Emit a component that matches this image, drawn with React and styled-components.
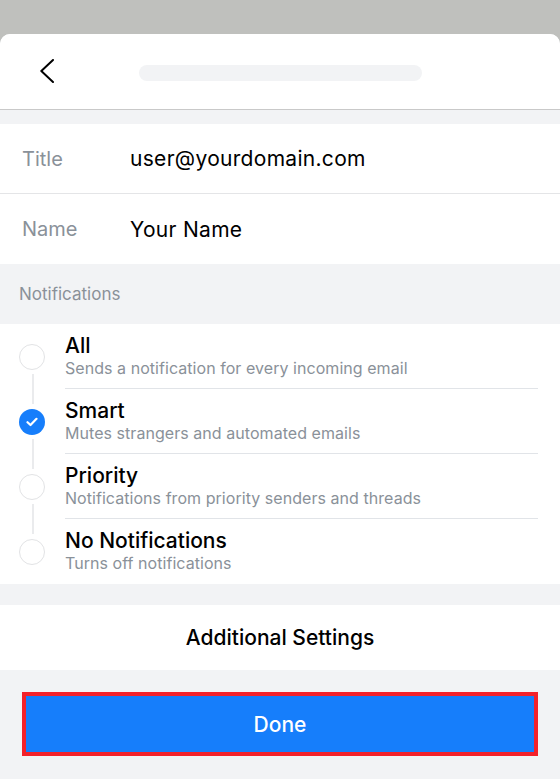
import React from "react";
import styled, { createGlobalStyle } from "styled-components";

const Global = createGlobalStyle`
  html, body { margin: 0; padding: 0; }
  body {
    background: #f2f3f5;
    font-family: Inter, "Noto Sans", "Liberation Sans", sans-serif;
    -webkit-font-smoothing: antialiased;
  }
`;

const Page = styled.div`
  background: #bfc0bd;
  padding-top: 34px;
  min-height: 779px;
  box-sizing: border-box;
  display: flex;
  flex-direction: column;
`;

const Sheet = styled.div`
  flex: 1;
  background: #f2f3f5;
  border-radius: 10px 10px 0 0;
  overflow: hidden;
  display: flex;
  flex-direction: column;
`;

const Header = styled.header`
  height: 75px;
  background: #fff;
  border-bottom: 1px solid #c9c9c9;
  display: flex;
  align-items: center;
  padding-left: 40px;
  gap: 85px;
  box-sizing: content-box;
`;

const BackButton = styled.button`
  border: 0;
  padding: 0;
  background: none;
  width: 14px;
  height: 24px;
  display: flex;
  margin-bottom: 1px;
`;

const TitlePill = styled.div`
  width: 283px;
  height: 16px;
  border-radius: 8px;
  background: #f2f3f5;
  margin-top: 2px;
`;

const Group = styled.section`
  background: #fff;
  margin-top: ${(p) => p.$gap || 0}px;
`;

const FieldRow = styled.div`
  height: ${(p) => p.$h}px;
  display: flex;
  align-items: center;
  padding-left: 22px;
  border-bottom: ${(p) => (p.$divider ? "1px solid #e4e5e7" : "none")};
`;

const FieldLabel = styled.span`
  width: 108px;
  font-size: 20px;
  color: #8a9199;
`;

const FieldValue = styled.span`
  font-size: 21px;
  letter-spacing: 0.3px;
  color: #000;
`;

const SectionHeader = styled.div`
  height: 60px;
  display: flex;
  align-items: center;
  padding-left: 19px;
  font-size: 17px;
  color: #8a9199;
`;

const OptionRow = styled.div`
  height: 65px;
  display: grid;
  grid-template-columns: 65px 1fr;
`;

const RadioCell = styled.div`
  position: relative;
  display: flex;
  align-items: center;
  padding-left: 19px;

  &::before,
  &::after {
    content: "";
    position: absolute;
    left: 31.5px;
    width: 2px;
    background: #eaebed;
  }
  &::before {
    top: 0;
    height: ${(p) => (p.$first ? 0 : 15)}px;
  }
  &::after {
    bottom: 0;
    height: ${(p) => (p.$last ? 0 : 15)}px;
  }
`;

const Radio = styled.span`
  width: 26px;
  height: 26px;
  box-sizing: border-box;
  border-radius: 50%;
  border: ${(p) => (p.$checked ? "none" : "1.5px solid #e2e3e5")};
  background: ${(p) => (p.$checked ? "#167efb" : "#fff")};
  display: flex;
  align-items: center;
  justify-content: center;
`;

const OptionText = styled.div`
  margin-right: 22px;
  padding-top: 9px;
  box-sizing: border-box;
  border-bottom: ${(p) => (p.$divider ? "1px solid #e1e4e8" : "none")};
  display: flex;
  flex-direction: column;
`;

const OptionTitle = styled.span`
  font-size: 21px;
  font-weight: 500;
  line-height: 25px;
  color: #000;
`;

const OptionSub = styled.span`
  font-size: 16px;
  line-height: 20px;
  letter-spacing: 0.05px;
  color: #8a9199;
`;

const ActionRow = styled.button`
  width: 100%;
  height: 65px;
  border: 0;
  background: #fff;
  font-family: inherit;
  font-size: 21px;
  font-weight: 500;
  color: #000;
  margin-top: 21px;
`;

const DoneWrap = styled.div`
  padding: 22px 22px 0 22px;
`;

const DoneButton = styled.button`
  width: 100%;
  height: 64px;
  box-sizing: border-box;
  border: 4px solid #f3212a;
  background: #167efb;
  color: #fff;
  font-family: inherit;
  font-size: 21px;
  font-weight: 500;
`;

const options = [
  { title: "All", sub: "Sends a notification for every incoming email" },
  { title: "Smart", sub: "Mutes strangers and automated emails", checked: true },
  { title: "Priority", sub: "Notifications from priority senders and threads" },
  { title: "No Notifications", sub: "Turns off notifications" },
];

export default function App() {
  return (
    <>
      <Global />
      <Page>
        <Sheet>
          <Header>
            <BackButton aria-label="Back">
              <svg width="14" height="24" viewBox="0 0 14 24">
                <polyline
                  points="13,1 1.3,12 13,23"
                  fill="none"
                  stroke="#000"
                  strokeWidth="2"
                  strokeLinecap="round"
                  strokeLinejoin="round"
                />
              </svg>
            </BackButton>
            <TitlePill />
          </Header>

          <Group $gap={14}>
            <FieldRow $h={69} $divider>
              <FieldLabel>Title</FieldLabel>
              <FieldValue>user@yourdomain.com</FieldValue>
            </FieldRow>
            <FieldRow $h={70}>
              <FieldLabel>Name</FieldLabel>
              <FieldValue>Your Name</FieldValue>
            </FieldRow>
          </Group>

          <SectionHeader>Notifications</SectionHeader>

          <Group>
            {options.map((o, i) => (
              <OptionRow key={o.title}>
                <RadioCell $first={i === 0} $last={i === options.length - 1}>
                  <Radio $checked={o.checked}>
                    {o.checked && (
                      <svg width="12" height="10" viewBox="0 0 12 10">
                        <polyline
                          points="1.5,5.2 4.5,8 10.5,1.8"
                          fill="none"
                          stroke="#fff"
                          strokeWidth="2.2"
                          strokeLinecap="round"
                          strokeLinejoin="round"
                        />
                      </svg>
                    )}
                  </Radio>
                </RadioCell>
                <OptionText $divider={i < options.length - 1}>
                  <OptionTitle>{o.title}</OptionTitle>
                  <OptionSub>{o.sub}</OptionSub>
                </OptionText>
              </OptionRow>
            ))}
          </Group>

          <ActionRow>Additional Settings</ActionRow>

          <DoneWrap>
            <DoneButton>Done</DoneButton>
          </DoneWrap>
        </Sheet>
      </Page>
    </>
  );
}
